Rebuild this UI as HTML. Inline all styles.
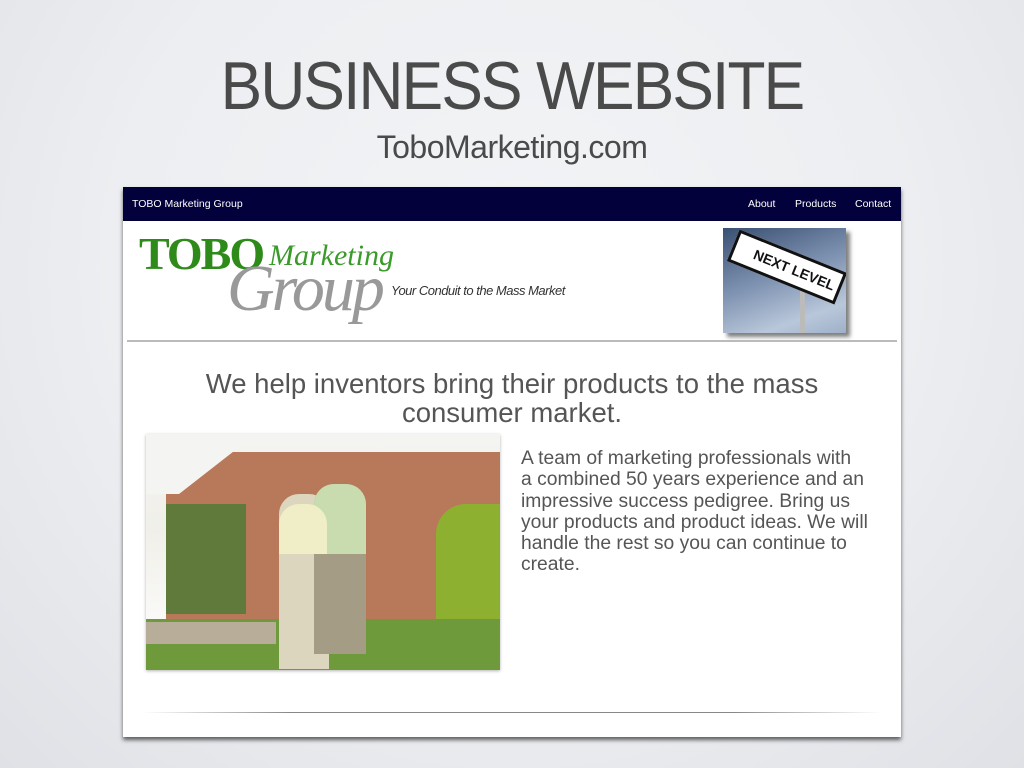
<!DOCTYPE html>
<html><head><meta charset="utf-8"><style>
*{margin:0;padding:0;box-sizing:border-box}
body{width:1024px;height:768px;overflow:hidden;background:radial-gradient(ellipse at 50% 35%,#f3f4f6 0%,#eceef1 55%,#dfe1e6 100%);font-family:"Liberation Sans",sans-serif;position:relative}
.t1{position:absolute;top:46px;left:0;width:1024px;text-align:center;font-size:68px;color:#4a4a4a;letter-spacing:-2px;line-height:80px;transform:scaleX(0.915)}
.t2{position:absolute;top:127px;left:0;width:1024px;text-align:center;font-size:32px;color:#4a4a4a;letter-spacing:-0.5px;line-height:40px}
.site{position:absolute;left:123px;top:187px;width:778px;height:550px;background:#fff;box-shadow:0 3px 4px rgba(0,0,0,.6)}
.nav{height:34px;background:#03013b;color:#fff;font-size:10.5px;position:relative}
.nav span{position:absolute;top:11px}
.hdr{position:relative;height:119px}
.hr{position:absolute;left:4px;right:4px;top:153px;height:2px;background:#bbb}
h1{position:absolute;left:0;width:778px;top:182px;text-align:center;font-weight:normal;font-size:27.5px;line-height:29px;color:#555}
.photo{position:absolute;left:23px;top:247px;width:354px;height:236px;overflow:hidden;background:linear-gradient(#f4f4f2 0%,#f0efe9 40%,#fff 100%);box-shadow:0 1px 3px rgba(0,0,0,.3)}
.txt{position:absolute;left:398px;top:261px;width:360px;font-size:19.3px;line-height:21.3px;color:#555}
.bl{position:absolute;left:20px;right:20px;top:525px;height:1px;background:linear-gradient(90deg,#fff,#888 20%,#888 80%,#fff)}
</style></head><body>
<div class="t1">BUSINESS WEBSITE</div>
<div class="t2">ToboMarketing.com</div>
<div class="site">
 <div class="nav"><span style="left:9px">TOBO Marketing Group</span><span style="left:625px">About</span><span style="left:672px">Products</span><span style="left:732px">Contact</span></div>
 <div class="hdr">
  <div style="position:absolute;left:16px;top:6px;font-family:'Liberation Serif',serif;font-weight:bold;font-size:46px;color:#2e8b1a;letter-spacing:-2px">TOBO</div>
  <div style="position:absolute;left:146px;top:18px;font-family:'Liberation Serif',serif;font-style:italic;font-size:30px;color:#3a9a2a">Marketing</div>
  <div style="position:absolute;left:104px;top:30px;font-family:'Liberation Serif',serif;font-style:italic;font-size:66px;color:#999;letter-spacing:-3px">Group</div>
  <div style="position:absolute;left:268px;top:62px;font-style:italic;font-size:13px;color:#333;letter-spacing:-.5px">Your Conduit to the Mass Market</div>
  <div style="position:absolute;left:600px;top:7px;width:123px;height:105px;overflow:hidden;background:linear-gradient(160deg,#3a5072,#7d91b0 45%,#b9c7da 80%,#9eb0c8);box-shadow:4px 4px 4px rgba(0,0,0,.5)">
   <div style="position:absolute;left:77px;top:45px;width:5px;height:60px;background:#bbb"></div>
   <div style="position:absolute;left:6px;top:22px;width:116px;height:34px;background:#fff;border:3px solid #111;transform:rotate(22deg);font-weight:bold;font-size:14px;line-height:28px;text-align:right;padding-right:4px;color:#111">NEXT LEVEL</div>
  </div>
 </div>
 <div class="hr"></div>
 <h1>We help inventors bring their products to the mass<br>consumer market.</h1>
 <div class="photo">
  <div style="position:absolute;left:20px;top:18px;width:334px;height:170px;background:#b8785a"></div>
  <div style="position:absolute;left:0;top:0;width:110px;height:60px;background:#f4f4f2;clip-path:polygon(0 0,100% 0,100% 0,30% 100%,0 100%)"></div>
  <div style="position:absolute;left:20px;top:70px;width:80px;height:110px;background:#5f7a3a"></div>
  <div style="position:absolute;left:290px;top:70px;width:64px;height:140px;background:#8db030;border-radius:30px 0 0 0"></div>
  <div style="position:absolute;left:0;top:185px;width:354px;height:51px;background:#6f9a3c"></div>
  <div style="position:absolute;left:0;top:188px;width:130px;height:22px;background:#b8ad98"></div>
  <div style="position:absolute;left:133px;top:60px;width:50px;height:175px;background:#ddd6bf;border-radius:20px 20px 0 0"></div>
  <div style="position:absolute;left:168px;top:50px;width:52px;height:170px;background:#a49c84;border-radius:20px 20px 0 0"></div>
  <div style="position:absolute;left:168px;top:50px;width:52px;height:70px;background:#c8dcb0;border-radius:20px 20px 0 0"></div>
  <div style="position:absolute;left:133px;top:70px;width:48px;height:50px;background:#f0eec6;border-radius:20px 20px 0 0"></div>
 </div>
 <div class="txt">A team of marketing professionals with<br>a combined 50 years experience and an<br>impressive success pedigree. Bring us<br>your products and product ideas. We will<br>handle the rest so you can continue to<br>create.</div>
 <div class="bl"></div>
</div>
</body></html>
